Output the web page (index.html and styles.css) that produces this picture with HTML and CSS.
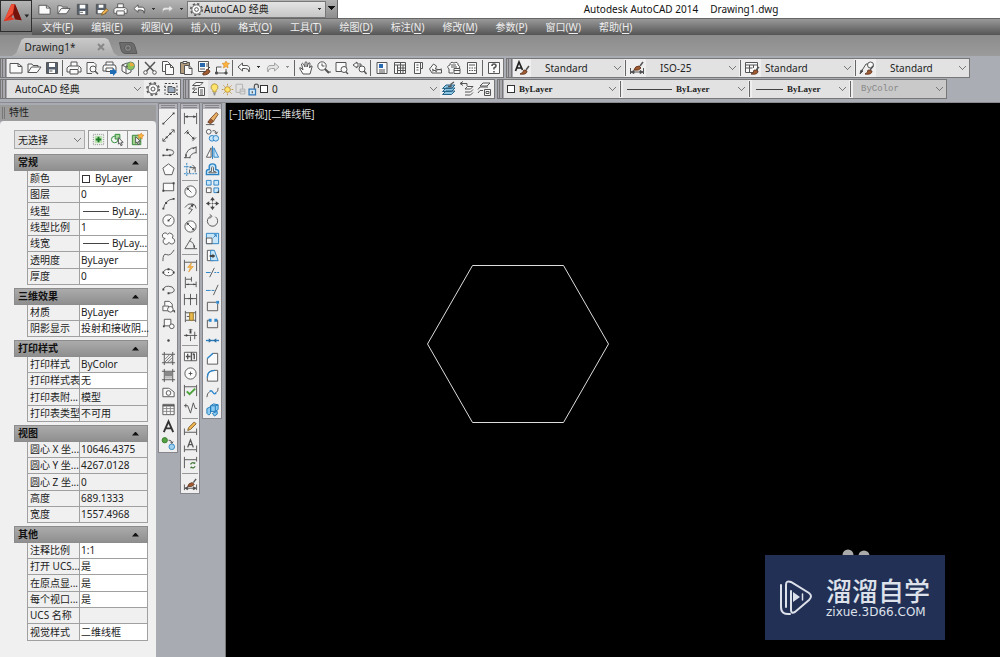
FILE: index.html
```html
<!DOCTYPE html>
<html lang="zh-CN">
<head>
<meta charset="utf-8">
<title>Autodesk AutoCAD 2014 Drawing1.dwg</title>
<link rel="stylesheet" href="styles.css">
</head>
<body>
<svg class="sprite" aria-hidden="true">
  <symbol id="new" viewBox="0 0 16 16"><path class="w" d="M2 3.500h8l4 3v6.500H2z"/><path d="M10 3.500v3h4"/></symbol>
  <symbol id="open" viewBox="0 0 16 16"><path class="w" d="M2 12.500V4h4l1 1.500h5V7"/><path class="w" d="M2 12.500L5.500 7h9.500l-4 5.500z"/></symbol>
  <symbol id="save" viewBox="0 0 16 16"><path class="k" d="M2.500 2.500h11v11h-11z"/><path fill="#fff" stroke="none" d="M5 3h6v4H5zM5 9.500h6V13H5z"/><path d="M5.500 11h3"/></symbol>
  <symbol id="saveas" viewBox="0 0 16 16"><path class="k" d="M2.500 2.500h10v10h-10z"/><path fill="#fff" stroke="none" d="M5 3h5v3H5zM4 8.500h7V12H4z"/><path class="o" d="M8 14l1-3 4-4 2 2-4 4z"/></symbol>
  <symbol id="print" viewBox="0 0 16 16"><path class="w" d="M5 6V2h6v4M3 6h10l2 2v4H1V8z"/><path class="w" d="M4 9.500h8v4.500H4z"/><path d="M12 8h1"/></symbol>
  <symbol id="undo" viewBox="0 0 16 16"><path class="w" d="M2 7l4.500-4v2.500H11Q15 6.500 13 12Q13 8.500 9.500 8.500h-3V11z"/></symbol>
  <symbol id="redo" viewBox="0 0 16 16"><path class="g" d="M14 7L9.500 3v2.500H5Q1 6.500 3 12Q3 8.500 6.500 8.500h3V11z"/></symbol>
  <symbol id="gear" viewBox="0 0 16 16"><circle class="w" cx="8" cy="8" r="5"/><circle cx="8" cy="8" r="6.200" stroke-width="1.500" stroke-dasharray="2.400 2.470"/><circle class="w" cx="8" cy="8" r="2"/></symbol>
  <symbol id="preview" viewBox="0 0 16 16"><path class="w" d="M3 13.500v-11h7l2 2v3M3 13.500h5"/><circle class="w" cx="9" cy="9" r="3"/><path stroke-width="1.500" d="M11 11l3 3"/></symbol>
  <symbol id="publish" viewBox="0 0 16 16"><path class="w" d="M4 5V2h7v3M2 5h11l1 2v4H1V7z"/><path class="w" d="M4 8h7v3.500H4z"/><path fill="#1f6db5" stroke="none" d="M8 10h3V8l4 4-4 4v-2H8z"/></symbol>
  <symbol id="box3d" viewBox="0 0 16 16"><path class="w" d="M2 5l5-2 4 2v7l-4 2-5-3z"/><circle cx="10.500" cy="6" r="4" fill="#8fc35a" stroke="#687"/><path fill="#e9ac40" stroke="none" d="M10 6V2.500A3.500 3.500 0 0 1 14 6z"/><path d="M2 5l4 2v6.500M6 7l2-1"/></symbol>
  <symbol id="cut" viewBox="0 0 16 16"><path stroke-width="1.500" d="M3 2l8.500 9M13 2L4.500 11"/><circle class="w" cx="3.500" cy="12.500" r="1.800"/><circle class="w" cx="12.500" cy="12.500" r="1.800"/></symbol>
  <symbol id="copy" viewBox="0 0 16 16"><path class="w" d="M2.500 1.500h5l3 3v7h-8z"/><path class="w" d="M5.500 4.500h5l3 3v7h-8z"/><path d="M10.500 4.500v3h3"/></symbol>
  <symbol id="paste" viewBox="0 0 16 16"><path fill="#b39c7a" d="M2.500 2.500h9v11h-9z"/><path class="w" d="M5 1.500h4v2H5zM6.500 5.500h4.500l3 3v6H6.500z"/><path d="M11 5.500v3h3"/></symbol>
  <symbol id="match" viewBox="0 0 16 16"><path class="w" d="M2.500 1.500h10v10h-10z"/><path fill="#2868ac" stroke="none" d="M4 3h5v4H4z"/><path d="M4 9h5M10 4h2M10 6h2"/><path class="b" d="M7 13q3 0 4-4l3 2q-1 4-7 4z"/><path stroke="#444" d="M12 9l2-2"/></symbol>
  <symbol id="block" viewBox="0 0 16 16"><path class="w" d="M2.500 13V7h5M2.500 13H12V9"/><path fill="#444" d="M1.500 12h2v2h-2zM11 12h2v2h-2z"/><path fill="#ffb33c" stroke="#d28a20" stroke-width=".6" d="M12 1l1 2 2.500.5-2 1.500.5 3-2-1.500L9.500 8l.5-3-2-1.500L11 3z"/></symbol>
  <symbol id="pan" viewBox="0 0 16 16"><path class="w" d="M5 14L2 9q-1-2 1-1l2 2L3.500 4q1-1.500 2 0L7 7V2.500q1-1.500 2 0V7l1.500-4q1.500-1 1.500 1l-.5 4L13 6q1.500-.5 1 1l-2 7z"/></symbol>
  <symbol id="zoomrt" viewBox="0 0 16 16"><circle class="w" cx="6" cy="6" r="4.200"/><path d="M6 3.500V6h2.500M11 12h4"/><path stroke-width="2" d="M9 9l4 4"/></symbol>
  <symbol id="zoomwin" viewBox="0 0 16 16"><path class="w" d="M2 2.500h10v9H2z"/><circle class="w" cx="10" cy="9.500" r="3"/><path stroke-width="1.500" d="M12 12l2 2"/></symbol>
  <symbol id="zoomprev" viewBox="0 0 16 16"><path class="w" d="M1 5l4-3v2h4v2H5v2z"/><circle class="w" cx="10" cy="9" r="3"/><path stroke-width="1.500" d="M12 11l2.500 3"/></symbol>
  <symbol id="props" viewBox="0 0 16 16"><path class="w" d="M3 2.500h10v11H3z"/><path fill="#2a6ab0" stroke="none" d="M5 4h4v4H5z"/><path d="M5 10h6M5 12h6"/></symbol>
  <symbol id="design" viewBox="0 0 16 16"><path class="w" d="M2.500 2.500h11v11h-11zM2.500 5h11M5.500 5v8M8.500 2.500v11M11 5v8M5.500 8h8M5.500 10.500h8"/></symbol>
  <symbol id="toolpal" viewBox="0 0 16 16"><path class="w" d="M4.500 2.500h6v11h-6zM10.500 2.500h2v6h-2M6.500 5h2M6.500 7.500h2M6.500 10h2"/></symbol>
  <symbol id="sheet" viewBox="0 0 16 16"><path class="w" d="M1.500 9l4-5 3 2-1 3 6 1v3H4zM4 11l10-2M4 9l5 3"/></symbol>
  <symbol id="markup" viewBox="0 0 16 16"><path class="w" d="M3 9Q0 6 4 5q0-4 4-2 4-2 4 2 3 1 1 4M5 5h5M5 7h6M3 9v4h4"/><path class="w" d="M8 8.500h6v5H8zM8 10.500h6"/></symbol>
  <symbol id="calc" viewBox="0 0 16 16"><path class="w" d="M3.500 2.500h9v11h-9z"/><path d="M5 5h6M5 8h1.500M7.500 8H9M10 8h1.500M5 10.500h1.500M7.500 10.500H9M10 10.500h1.500"/></symbol>
  <symbol id="help" viewBox="0 0 16 16"><path class="w" d="M2.500 2.500h11v11h-11z"/><path stroke-width="1.600" d="M6 6q0-2 2-2t2 2q0 1-2 2v1.500M8 11v1.500"/></symbol>
  <symbol id="textstyle" viewBox="0 0 16 16"><path stroke-width="1.700" stroke="#222" d="M1.500 11L5 2l3.500 8M3 8h4.500"/><path class="b" d="M6 14q3-1 4-4l3 1q0 4-7 3z"/><path stroke-width="1.500" d="M12 10l3-4"/></symbol>
  <symbol id="dimstyle" viewBox="0 0 16 16"><path d="M1.500 8v6M14.500 8v6M2 12h12"/><path fill="#444" d="M2 12l3-1.500v3zM14 12l-3-1.500v3z"/><path class="b" d="M5 10q1-4 5-4l2 2q-2 3-7 2z"/><path stroke-width="1.500" d="M11 6l3-4"/></symbol>
  <symbol id="tablestyle" viewBox="0 0 16 16"><path class="w" d="M1.500 2.500h12v10h-12z"/><path d="M1.500 5h12M1.500 8h7M5.500 5v7M9.500 5v3"/><path class="b" d="M7 14q3-1 3-4l4 1q0 4-7 3z"/><path stroke-width="1.500" d="M12 10l3-3"/></symbol>
  <symbol id="mleader" viewBox="0 0 16 16"><path d="M2 12L7 4h2"/><path fill="#444" d="M1 14l1-4 2 1z"/><circle class="w" cx="11.500" cy="5" r="3"/><path class="b" d="M6 14q3-1 3-4l4 1q0 4-7 3z"/><path stroke-width="1.500" d="M11 10l3-4"/></symbol>
  <symbol id="bulb" viewBox="0 0 16 16"><path fill="#ffe46b" stroke="#aa8930" d="M6 11V9Q3 7 4 4q1-3 4-3t4 3q1 3-2 5v2z"/><path d="M6.500 12.500h3M7 14.500h2"/></symbol>
  <symbol id="sun" viewBox="0 0 16 16"><circle cx="8" cy="8" r="3.500" fill="#ffe46b" stroke="#b68125"/><path stroke="#b68125" d="M8 1v2M8 13v2M1 8h2M13 8h2M3 3l1.500 1.500M11.500 11.500L13 13M3 13l1.500-1.500M11.500 4.500L13 3"/></symbol>
  <symbol id="vp" viewBox="0 0 16 16"><path stroke="#aaa" d="M2.500 1.500h8v10h-8z"/><path fill="#ddd" stroke="#aaa" d="M7.500 7.500h6v6h-6zM7.500 10h6"/></symbol>
  <symbol id="lock" viewBox="0 0 16 16"><path fill="#cfe6f7" stroke="#3177b8" stroke-width="1.500" d="M2.500 7.500h8v7h-8z"/><path stroke-width="1.500" d="M9 7V4q0-2.500 2.500-2.500T14 4v2M6.500 10v2.500"/></symbol>
  <symbol id="layers" viewBox="0 0 16 16"><path class="w" d="M1.500 4.500L5 1.500h7l-3 3zM1.500 8L4 5.500M1.500 11.500L4 9M1.500 8H6M1.500 11.500H6"/><path class="w" d="M7.500 6.500h6v8h-6zM9 9h3M9 11h3M9 13h3"/></symbol>
  <symbol id="layerset" viewBox="0 0 16 16"><path fill="#8cc3df" stroke="#28658b" d="M1.500 13.500L5 10h9l-3.500 3.500zM1.500 10.500L5 7h9l-3.500 3.500zM1.500 7.500L5 4h9l-3.500 3.500z"/><path stroke-width="1.300" d="M7 5.500h3V3l3-2"/></symbol>
  <symbol id="layerprev" viewBox="0 0 16 16"><path d="M1 2.500h7V5M1 2.500l3-2M1 2.500l3 2"/><path class="w" d="M6 8l2.500-2.500H14L11.500 8zM6 11h5.500L14 8.500M6 14h5.500L14 11.500"/></symbol>
  <symbol id="layerstate" viewBox="0 0 16 16"><path class="w" d="M3 5l3-3h7l-3 3zM1 8.500L3 6h8M1 12l2-2.500h3"/><path class="w" d="M7.500 8.500h6v6h-6zM9 10.500h3v2H9z"/></symbol>
  <symbol id="wsp" viewBox="0 0 16 16"><path stroke="#444" stroke-dasharray="2 1.500" d="M2 2.500h12v11H2z"/><path fill="#99a9bd" d="M5 5.500h4l1 1h2v5H5z"/><path d="M1 5l2 2M13 12l2 2"/></symbol>
  <symbol id="line" viewBox="0 0 16 16"><path d="M2.500 13.500l11-11"/><path class="p" d="M1.500 12.500h2v2h-2zM12.500 1.500h2v2h-2z"/></symbol>
  <symbol id="xline" viewBox="0 0 16 16"><path d="M2 14L14 2M2 11v3h3M11 2h3v3"/><path class="p" d="M5 9h2v2H5zM9 5h2v2H9z"/></symbol>
  <symbol id="pline" viewBox="0 0 16 16"><path d="M2.500 11h7q4 0 4-3t-4-3H7"/><path class="p" d="M1.500 10h2v2h-2zM8.500 10h2v2h-2zM5.500 4h2v2h-2z"/></symbol>
  <symbol id="polygon" viewBox="0 0 16 16"><path class="w" d="M8 2l6 4.500L11.700 13.500H4.300L2 6.500z"/></symbol>
  <symbol id="rect" viewBox="0 0 16 16"><path class="w" d="M2.500 4.500h11v8h-11z"/><path class="p" d="M1.500 11.500h2v2h-2zM12.500 3.500h2v2h-2z"/></symbol>
  <symbol id="arc" viewBox="0 0 16 16"><path d="M2.500 14Q4 4 13.500 3"/><path class="p" d="M1.500 12.500h2v2h-2zM4.500 6.500h2v2h-2zM12.500 2h2v2h-2z"/></symbol>
  <symbol id="circle" viewBox="0 0 16 16"><circle class="w" cx="8" cy="8" r="6"/><path d="M8 8l3-3"/><path class="p" d="M7 7h2v2H7z"/></symbol>
  <symbol id="cloud" viewBox="0 0 16 16"><path class="w" d="M4.500 8A3 3 0 1 1 7 3.500a3 3 0 1 1 5 4A3.200 3.200 0 1 1 8.500 12 3.200 3.200 0 1 1 4.500 8z"/></symbol>
  <symbol id="spline" viewBox="0 0 16 16"><path d="M2 14Q2 5 6 7t8-5"/></symbol>
  <symbol id="ellipse" viewBox="0 0 16 16"><ellipse class="w" cx="8" cy="8" rx="5.500" ry="3.500"/><path class="p" d="M7.500 7.500h1v1h-1zM1.500 7h2v2h-2zM12.500 7h2v2h-2zM7 3.500h2v2H7z"/></symbol>
  <symbol id="ellarc" viewBox="0 0 16 16"><path d="M2.500 8Q3 4.500 8 4.500t6 3.500-6 4"/><path class="p" d="M1.500 7h2v2h-2zM7 11h2v2H7z"/></symbol>
  <symbol id="insert" viewBox="0 0 16 16"><path class="w" d="M4 7V2.500h5l3 3V9H7"/><path class="w" d="M2 7.500h6v5H2z"/><circle class="w" cx="10" cy="11" r="3"/><path class="p" d="M12 12h3v3z"/></symbol>
  <symbol id="mkblock" viewBox="0 0 16 16"><path class="w" d="M3.500 3.500h7v7h-7z"/><circle class="w" cx="11.500" cy="11" r="2.500"/><path class="p" d="M2 10h2v2H2z"/></symbol>
  <symbol id="point" viewBox="0 0 16 16"><circle class="p" cx="8" cy="8" r="1.300"/></symbol>
  <symbol id="hatch" viewBox="0 0 16 16"><path d="M3.500 1v14M12.500 1v14M1 3.500h14M1 12.500h14"/><path stroke="#777" d="M4 9l5-5M4 12l8-8M7 12l5-5M10 12l2-2"/></symbol>
  <symbol id="gradient" viewBox="0 0 16 16"><path d="M3.500 1v14M12.500 1v14M1 3.500h14M1 12.500h14"/><path fill="#888" stroke="none" d="M4 4h8v5H4z"/><path stroke="#999" d="M4 10.500h8"/></symbol>
  <symbol id="region" viewBox="0 0 16 16"><path class="w" d="M2 3.500h6q1 0 2 1l4 3v5H2z"/><circle class="w" cx="8" cy="8.500" r="2.500"/></symbol>
  <symbol id="table" viewBox="0 0 16 16"><path class="w" d="M2 2.500h12v11H2z"/><path stroke="#888" d="M2 7h12M2 10h12M6 5v8M10 5v8"/><path stroke-width="1.500" d="M2 4h12"/></symbol>
  <symbol id="mtext" viewBox="0 0 16 16"><path stroke="#333" stroke-width="2" d="M3 14L8 2.500 13 14M5 10h6"/></symbol>
  <symbol id="addsel" viewBox="0 0 16 16"><circle cx="4" cy="4.500" r="2.800" fill="#54a143" stroke="#387b2b"/><circle cx="11.500" cy="11.500" r="3" fill="#9ed0ef" stroke="#368cc2"/><path d="M8 4.500q4 0 3.500 3M10 6l1.500 2L13 6"/></symbol>
  <symbol id="dimlin" viewBox="0 0 16 16"><path d="M1.500 2v12M14.500 2v12M2 6h12"/><path class="p" d="M2 6l3-1.500v3zM14 6l-3-1.500v3z"/></symbol>
  <symbol id="dimali" viewBox="0 0 16 16"><path d="M1.500 6l4-4M10 14l4-4M4.500 4.500l7 7"/><path class="p" d="M4 4h3L4 7zM12 12H9l3-3z"/></symbol>
  <symbol id="arclen" viewBox="0 0 16 16"><path d="M2.500 14Q3 3 14 2.500M7 14q1-5 7-6M1 13.500h7M14 1.500V9"/><path class="p" d="M2 10h2v3zM13 3l-3 .5 1 1z"/></symbol>
  <symbol id="ordinate" viewBox="0 0 16 16"><path stroke="#287fc1" stroke-dasharray="2 1" d="M4 1v14M1 12.500h14M1 5h8"/><path d="M7 6h6v5M10 3l3 3-3 2M7 8v4"/></symbol>
  <symbol id="radius" viewBox="0 0 16 16"><circle class="w" cx="8" cy="8" r="6"/><path d="M9 9L5 5"/><path class="p" d="M4 4h3L4 7z"/></symbol>
  <symbol id="jograd" viewBox="0 0 16 16"><path d="M2 7q3-5 8-4 4 1 4 5M11 4L6 8l4 1-4 5"/><path class="p" d="M12 3l-4 1 2 3z"/></symbol>
  <symbol id="diameter" viewBox="0 0 16 16"><circle class="w" cx="8" cy="8" r="6"/><path d="M4 4l8 8"/><path class="p" d="M4 4h3L4 7zM12 12H9l3-3z"/></symbol>
  <symbol id="angular" viewBox="0 0 16 16"><path d="M15 13.500H2L9 2M7 5q5 2 5 8"/><path class="p" d="M12 13l-1-3h2z"/></symbol>
  <symbol id="quick" viewBox="0 0 16 16"><path d="M1.500 2v12M14.500 2v12M2 4.500h12"/><path fill="#ffb849" stroke="#df9934" stroke-width=".7" d="M9 5L5 10h3l-2 5 5-6H8z"/></symbol>
  <symbol id="baseline" viewBox="0 0 16 16"><path d="M2.500 2v12M9 2v5M14 7v6M3 4.500h6M3 10h11"/><path class="p" d="M3 10l3-1v2zM14 10l-3-1v2z"/></symbol>
  <symbol id="continue" viewBox="0 0 16 16"><path d="M1.500 2v12M8 2v12M14.500 2v12M1.500 7h13"/><path class="p" d="M8 7L6 6v2zM8 7l2-1v2z"/></symbol>
  <symbol id="dimspace" viewBox="0 0 16 16"><path d="M2.500 2v12M13.500 2v12M2.500 4h11M2.500 12h11M4 8h3"/><path fill="#e8b94b" stroke="#9a792b" d="M7 4h4v8H7z"/></symbol>
  <symbol id="dimbreak" viewBox="0 0 16 16"><path d="M8 2v4M8 10v5M1 9h14M6 3h4M12.500 5v8"/><path class="p" d="M6 9L3 7.500v3zM7 4h2v3H7z"/></symbol>
  <symbol id="tolerance" viewBox="0 0 16 16"><path class="w" d="M1.500 3.500h13v9h-13z"/><path stroke-width="1.500" d="M9 3.500v9M5 5v6M3 8h5M12 5v6M10.500 6L12 5"/></symbol>
  <symbol id="center" viewBox="0 0 16 16"><circle class="w" cx="8" cy="8" r="6"/><path d="M8 6v4M6 8h4"/></symbol>
  <symbol id="inspect" viewBox="0 0 16 16"><path d="M1.500 2v12M14.500 2v12M2 4h12"/><path stroke="#4ba13a" stroke-width="2" d="M4 9l3 3 6-6"/></symbol>
  <symbol id="jogline" viewBox="0 0 16 16"><path d="M1 6h4l3 8 3-11 2 6h2M3 4v4"/></symbol>
  <symbol id="dimedit" viewBox="0 0 16 16"><path d="M1.500 8v7M14.500 8v7M2 12h12"/><path class="o" d="M5 10l1-3 6-6 2 2-6 6z"/></symbol>
  <symbol id="dimtedit" viewBox="0 0 16 16"><path d="M1.500 8v7M14.500 8v7M2 12.500h12"/><path stroke-width="1.400" d="M5 10l3-8 3 8M6 7h4"/></symbol>
  <symbol id="dimupdate" viewBox="0 0 16 16"><path d="M1.500 2v12M14.500 2v5M2 5h12"/><path stroke="#3c7430" stroke-width="1.300" d="M8 10q2-3 4-1l1-1M13 12q-2 3-4 1l-1 1"/></symbol>
  <symbol id="erase" viewBox="0 0 16 16"><path class="b" d="M3 12l3-4 3 3-3 2.500z"/><path fill="#e7b066" stroke="#80512c" d="M6 8l6-6.500 2 2L9 11z"/><path d="M1 14.500h9"/></symbol>
  <symbol id="copyobj" viewBox="0 0 16 16"><circle class="w" cx="4" cy="4" r="2.500"/><path d="M8 3q4-1 4 3M10.500 4.500L12 6.500 13.500 4"/><g class="c"><circle cx="7.500" cy="11" r="3"/><circle cx="11.500" cy="11" r="3"/></g></symbol>
  <symbol id="mirror" viewBox="0 0 16 16"><path class="w" d="M6.500 3v10h-5z"/><path class="c" d="M9.500 3v10h5z"/><path stroke="#267dbd" d="M8 1v14"/></symbol>
  <symbol id="offset" viewBox="0 0 16 16"><path class="c" stroke-width="1.500" d="M1.500 13.500V10q0-2 3-2V5q0-3 3.500-3t3.500 3v3q3 0 3 2v3.500z"/><path class="w" d="M4 11.500q0-1.500 3-1.500V6q1-2 2 0v4q3 0 3 1.500z"/></symbol>
  <symbol id="array" viewBox="0 0 16 16"><path class="w" d="M1.500 9.500h5v5h-5z"/><path class="c" d="M1.500 1.500h5v5h-5zM9.500 1.500h5v5h-5zM9.500 9.500h5v5h-5z"/><path class="p" d="M12 15h3v-3z"/></symbol>
  <symbol id="move" viewBox="0 0 16 16"><path stroke-dasharray="4 1 2 1" d="M8 2v12M2 8h12"/><path class="p" d="M8 1l2.500 3.500h-5zM8 15l2.500-3.500h-5zM1 8l3.500-2.500v5zM15 8l-3.500-2.500v5z"/></symbol>
  <symbol id="rotate" viewBox="0 0 16 16"><path d="M6 3.500A5.500 5.500 0 1 0 11 4M5 1.500l2.500 2L5 6"/></symbol>
  <symbol id="scale" viewBox="0 0 16 16"><path class="c" d="M1.500 2.500h13v11h-13z"/><path class="w" d="M1.500 7.500h6v6h-6z"/><path stroke="#267dbd" d="M9 7l3-3M9.500 4H12v2.500"/></symbol>
  <symbol id="stretch" viewBox="0 0 16 16"><path class="w" d="M2.500 2.500H9v11H2.500z"/><path class="c" d="M6 2.500h4l4 11H6z"/><path class="p" d="M5 7.500h3V6l3 2.500L8 11V9.500H5z"/></symbol>
  <symbol id="trim" viewBox="0 0 16 16"><path stroke="#287fc1" d="M1 8h5M10 8h2M13 8h2"/><path d="M5 13l5-10"/></symbol>
  <symbol id="extend" viewBox="0 0 16 16"><path stroke="#287fc1" d="M1 9h5M7 9h3"/><path d="M9 14l5-11"/></symbol>
  <symbol id="breakpt" viewBox="0 0 16 16"><path d="M12 3.500H2.500v9h11V5"/><path fill="#2b86cc" stroke="none" d="M12 2h3v3h-3z"/></symbol>
  <symbol id="break" viewBox="0 0 16 16"><path d="M5 4.500H2.500v8h11v-8H11"/><path fill="#2b86cc" stroke="none" d="M4 3h3v3H4zM10 3h3v3h-3z"/></symbol>
  <symbol id="join" viewBox="0 0 16 16"><path stroke="#287fc1" stroke-width="1.500" d="M1 8h14"/><path fill="#2b6b9e" stroke="none" d="M4 5.500L7 8l-3 2.500zM12 5.500L9 8l3 2.500z"/></symbol>
  <symbol id="chamfer" viewBox="0 0 16 16"><path class="w" d="M2.500 14V8l6-5.500h5V14z"/><path stroke="#2b86cc" stroke-width="1.500" d="M2.500 8l6-5.500"/></symbol>
  <symbol id="fillet" viewBox="0 0 16 16"><path class="w" d="M2.500 14V10q0-7.500 8-7.500h3V14z"/><path stroke="#2b86cc" stroke-width="1.500" d="M2.500 10q0-7.500 8-7.500"/></symbol>
  <symbol id="blend" viewBox="0 0 16 16"><path d="M2 13q0-4 3-6M12 8q2-1 2-5"/><path stroke="#2b86cc" stroke-width="1.500" d="M5 7q2-2 3.500 1t3.500 0"/></symbol>
  <symbol id="explode" viewBox="0 0 16 16"><path fill="#8ecdf3" stroke="#1d78b8" d="M6 4l3-2 5 1v5l-3 2H6zM6 4h5v6M11 4l3-1M2 7l4-2v7l-2 2-2-2zM8 12l5-2v3l-3 2z"/></symbol>
  <symbol id="qsel" viewBox="0 0 16 16"><path stroke="#888" stroke-dasharray="1 1" d="M2.500 2.500h11v11h-11z"/><path fill="#bfe3b4" stroke="none" d="M4 4h8v8H4z"/><path stroke="#1c7a26" stroke-width="2" d="M8 5v6M5 8h6"/></symbol>
  <symbol id="pick" viewBox="0 0 16 16"><circle cx="5" cy="8" r="3.500" stroke="#2d8a36"/><path fill="#a9d79e" stroke="#2d8a36" d="M5.500 2.500h5v5h-5z"/><path class="w" d="M9 6l5 5h-2l1 3-1.500.5-1-3L9 13z"/></symbol>
  <symbol id="qpick" viewBox="0 0 16 16"><path fill="#9ed28c" stroke="#39843a" d="M2.500 3.500h9v10h-9z"/><path class="w" d="M6 5l5 5H9l1 3-1.500.5-1-3L6 12z"/><path fill="#ffb641" stroke="#d17c23" stroke-width=".6" d="M12 1l1 2 2 .5-2 1.500v2.500l-2-1.500-2 1 .5-2.500L8 3h3z"/></symbol>
</svg>

<header class="top">
  <button class="app" aria-label="应用程序菜单">
    <svg viewBox="0 0 32 31" aria-hidden="true"><path fill="#b91f12" d="M3 21L11 3h4l7 17-7-1-2-5-3 4z"/><path fill="#ef5138" d="M11 3h3l-1 9-10 9z"/><path fill="#74130c" d="M13 12l2-9 7 17-7-1z"/><path fill="#e53923" d="M3 21l7-5 5 3-5 1z"/><path fill="#222" d="M25 14h5l-2.500 3z"/></svg>
  </button>
  <div class="bars">
    <div class="title">
      <div class="quick">
        <button aria-label="新建"><svg><use href="#new"/></svg></button>
        <button aria-label="打开"><svg><use href="#open"/></svg></button>
        <button aria-label="保存"><svg><use href="#save"/></svg></button>
        <button aria-label="另存为"><svg><use href="#saveas"/></svg></button>
        <button aria-label="打印"><svg><use href="#print"/></svg></button>
        <button aria-label="放弃"><svg><use href="#undo"/></svg></button>
        <i class="arrow"></i>
        <button aria-label="重做"><svg><use href="#redo"/></svg></button>
        <i class="arrow"></i>
        <div class="ws"><svg aria-hidden="true"><use href="#gear"/></svg><select aria-label="工作空间"><option>AutoCAD 经典</option></select><i class="arrow"></i></div>
        <button class="more" aria-label="自定义快速访问工具栏"></button>
      </div>
      <h1><span>Autodesk AutoCAD 2014</span><span>Drawing1.dwg</span></h1>
    </div>
    <nav class="menu">
      <button>文件(<u>F</u>)</button><button>编辑(<u>E</u>)</button><button>视图(<u>V</u>)</button><button>插入(<u>I</u>)</button><button>格式(<u>O</u>)</button><button>工具(<u>T</u>)</button><button>绘图(<u>D</u>)</button><button>标注(<u>N</u>)</button><button>修改(<u>M</u>)</button><button>参数(<u>P</u>)</button><button>窗口(<u>W</u>)</button><button>帮助(<u>H</u>)</button>
    </nav>
  </div>
</header>

<div class="tabs">
  <button class="tab">Drawing1*<svg viewBox="0 0 8 8" aria-hidden="true"><path d="M1 1l6 6M7 1L1 7"/></svg></button>
  <button class="addtab" aria-label="新图形"><svg viewBox="0 0 20 14" aria-hidden="true"><path fill="#6c6c6c" stroke="#5a5a5a" d="M1.500 1.500H13q3 0 4 4l2 7H7q-3 0-4-4z"/><circle cx="10" cy="7" r="3.500" fill="#8d8d8d" stroke="#5a5a5a"/><path stroke="#5a5a5a" d="M10 5v4M8 7h4"/></svg></button>
</div>

<div class="toolbars">
  <div class="row">
    <div class="bar">
      <i class="grip"></i>
      <button aria-label="新建"><svg><use href="#new"/></svg></button><button aria-label="打开"><svg><use href="#open"/></svg></button><button aria-label="保存"><svg><use href="#save"/></svg></button>
      <i class="sep"></i>
      <button aria-label="打印"><svg><use href="#print"/></svg></button><button aria-label="打印预览"><svg><use href="#preview"/></svg></button><button aria-label="发布"><svg><use href="#publish"/></svg></button><button aria-label="三维打印"><svg><use href="#box3d"/></svg></button>
      <i class="sep"></i>
      <button aria-label="剪切"><svg><use href="#cut"/></svg></button><button aria-label="复制"><svg><use href="#copy"/></svg></button><button aria-label="粘贴"><svg><use href="#paste"/></svg></button><button aria-label="特性匹配"><svg><use href="#match"/></svg></button><button aria-label="块编辑器"><svg><use href="#block"/></svg></button>
      <i class="sep"></i>
      <button aria-label="放弃"><svg><use href="#undo"/></svg></button><i class="arrow"></i><button aria-label="重做"><svg><use href="#redo"/></svg></button><i class="arrow dim"></i>
      <i class="sep"></i>
      <button aria-label="平移"><svg><use href="#pan"/></svg></button><button aria-label="实时缩放"><svg><use href="#zoomrt"/></svg></button><button aria-label="窗口缩放"><svg><use href="#zoomwin"/></svg></button><button aria-label="缩放上一个"><svg><use href="#zoomprev"/></svg></button>
      <i class="sep"></i>
      <button aria-label="特性"><svg><use href="#props"/></svg></button><button aria-label="设计中心"><svg><use href="#design"/></svg></button><button aria-label="工具选项板"><svg><use href="#toolpal"/></svg></button><button aria-label="图纸集"><svg><use href="#sheet"/></svg></button><button aria-label="标记集"><svg><use href="#markup"/></svg></button><button aria-label="计算器"><svg><use href="#calc"/></svg></button>
      <i class="sep"></i>
      <button aria-label="帮助"><svg><use href="#help"/></svg></button>
    </div>
    <div class="bar">
      <i class="grip"></i>
      <button aria-label="文字样式"><svg><use href="#textstyle"/></svg></button><select class="style" aria-label="文字样式控制"><option>Standard</option></select>
      <i class="sep"></i>
      <button aria-label="标注样式"><svg><use href="#dimstyle"/></svg></button><select class="style" aria-label="标注样式控制"><option>ISO-25</option></select>
      <i class="sep"></i>
      <button aria-label="表格样式"><svg><use href="#tablestyle"/></svg></button><select class="style near" aria-label="表格样式控制"><option>Standard</option></select>
      <i class="sep"></i>
      <button aria-label="多重引线样式"><svg><use href="#mleader"/></svg></button><select class="style" aria-label="多重引线样式控制"><option>Standard</option></select>
    </div>
  </div>
  <div class="row">
    <div class="bar">
      <i class="grip"></i>
      <select class="space" aria-label="工作空间控制"><option>AutoCAD 经典</option></select>
      <button aria-label="工作空间设置"><svg><use href="#gear"/></svg></button><button aria-label="我的工作空间"><svg><use href="#wsp"/></svg></button>
    </div>
    <div class="bar">
      <i class="grip"></i>
      <button aria-label="图层特性"><svg><use href="#layers"/></svg></button>
      <div class="layer"><svg><use href="#bulb"/></svg><svg><use href="#sun"/></svg><svg><use href="#vp"/></svg><svg><use href="#lock"/></svg><i class="swatch"></i><select aria-label="图层控制"><option>0</option></select></div>
      <button aria-label="置为当前"><svg><use href="#layerset"/></svg></button><button aria-label="上一个图层"><svg><use href="#layerprev"/></svg></button><button aria-label="图层状态"><svg><use href="#layerstate"/></svg></button>
    </div>
    <div class="bar serif">
      <i class="grip"></i>
      <div class="pick color"><i class="swatch"></i><select aria-label="颜色控制"><option>ByLayer</option></select></div>
      <i class="sep"></i>
      <div class="pick ltype"><i class="rule"></i><select aria-label="线型控制"><option>ByLayer</option></select></div>
      <i class="sep"></i>
      <div class="pick lweight"><i class="rule"></i><select aria-label="线宽控制"><option>ByLayer</option></select></div>
      <i class="sep"></i>
      <select class="plot" aria-label="打印样式控制" disabled><option>ByColor</option></select>
    </div>
  </div>
</div>

<main class="work">
  <aside class="palette">
    <h2><i class="grip"></i>特性</h2>
    <div class="props">
      <div class="choose">
        <select aria-label="选择对象"><option>无选择</option></select>
        <button aria-label="切换 PICKADD"><svg><use href="#qsel"/></svg></button><button aria-label="选择"><svg><use href="#pick"/></svg></button><button aria-label="快速选择"><svg><use href="#qpick"/></svg></button>
      </div>
      <section><h3>常规<i></i></h3>
        <table>
          <tr><th>颜色</th><td><i class="swatch"></i>ByLayer</td></tr>
          <tr><th>图层</th><td>0</td></tr>
          <tr><th>线型</th><td><i class="rule"></i>ByLay...</td></tr>
          <tr><th>线型比例</th><td>1</td></tr>
          <tr><th>线宽</th><td><i class="rule"></i>ByLay...</td></tr>
          <tr><th>透明度</th><td>ByLayer</td></tr>
          <tr><th>厚度</th><td>0</td></tr>
        </table>
      </section>
      <section><h3>三维效果<i></i></h3>
        <table>
          <tr><th>材质</th><td>ByLayer</td></tr>
          <tr><th>阴影显示</th><td>投射和接收阴...</td></tr>
        </table>
      </section>
      <section><h3>打印样式<i></i></h3>
        <table>
          <tr><th>打印样式</th><td class="ro">ByColor</td></tr>
          <tr><th>打印样式表</th><td>无</td></tr>
          <tr><th>打印表附...</th><td class="ro">模型</td></tr>
          <tr><th>打印表类型</th><td class="ro">不可用</td></tr>
        </table>
      </section>
      <section><h3>视图<i></i></h3>
        <table>
          <tr><th>圆心 X 坐...</th><td class="ro">10646.4375</td></tr>
          <tr><th>圆心 Y 坐...</th><td class="ro">4267.0128</td></tr>
          <tr><th>圆心 Z 坐...</th><td class="ro">0</td></tr>
          <tr><th>高度</th><td class="ro">689.1333</td></tr>
          <tr><th>宽度</th><td class="ro">1557.4968</td></tr>
        </table>
      </section>
      <section><h3>其他<i></i></h3>
        <table>
          <tr><th>注释比例</th><td>1:1</td></tr>
          <tr><th>打开 UCS...</th><td>是</td></tr>
          <tr><th>在原点显...</th><td>是</td></tr>
          <tr><th>每个视口...</th><td>是</td></tr>
          <tr><th>UCS 名称</th><td class="ro"></td></tr>
          <tr><th>视觉样式</th><td>二维线框</td></tr>
        </table>
      </section>
    </div>
  </aside>

  <div class="docks">
    <div class="dock" role="toolbar" aria-label="绘图">
      <button aria-label="直线"><svg><use href="#line"/></svg></button>
      <button aria-label="构造线"><svg><use href="#xline"/></svg></button>
      <button aria-label="多段线"><svg><use href="#pline"/></svg></button>
      <button aria-label="多边形"><svg><use href="#polygon"/></svg></button>
      <button aria-label="矩形"><svg><use href="#rect"/></svg></button>
      <button aria-label="圆弧"><svg><use href="#arc"/></svg></button>
      <button aria-label="圆"><svg><use href="#circle"/></svg></button>
      <button aria-label="修订云线"><svg><use href="#cloud"/></svg></button>
      <button aria-label="样条曲线"><svg><use href="#spline"/></svg></button>
      <button aria-label="椭圆"><svg><use href="#ellipse"/></svg></button>
      <button aria-label="椭圆弧"><svg><use href="#ellarc"/></svg></button>
      <button aria-label="插入块"><svg><use href="#insert"/></svg></button>
      <button aria-label="创建块"><svg><use href="#mkblock"/></svg></button>
      <button aria-label="点"><svg><use href="#point"/></svg></button>
      <button aria-label="图案填充"><svg><use href="#hatch"/></svg></button>
      <button aria-label="渐变色"><svg><use href="#gradient"/></svg></button>
      <button aria-label="面域"><svg><use href="#region"/></svg></button>
      <button aria-label="表格"><svg><use href="#table"/></svg></button>
      <button aria-label="多行文字"><svg><use href="#mtext"/></svg></button>
      <button aria-label="添加选定对象"><svg><use href="#addsel"/></svg></button>
    </div>
    <div class="dock" role="toolbar" aria-label="标注">
      <button aria-label="线性"><svg><use href="#dimlin"/></svg></button>
      <button aria-label="对齐"><svg><use href="#dimali"/></svg></button>
      <button aria-label="弧长"><svg><use href="#arclen"/></svg></button>
      <button aria-label="坐标"><svg><use href="#ordinate"/></svg></button>
      <hr>
      <button aria-label="半径"><svg><use href="#radius"/></svg></button>
      <button aria-label="折弯"><svg><use href="#jograd"/></svg></button>
      <button aria-label="直径"><svg><use href="#diameter"/></svg></button>
      <button aria-label="角度"><svg><use href="#angular"/></svg></button>
      <hr>
      <button aria-label="快速标注"><svg><use href="#quick"/></svg></button>
      <button aria-label="基线"><svg><use href="#baseline"/></svg></button>
      <button aria-label="连续"><svg><use href="#continue"/></svg></button>
      <button aria-label="等距标注"><svg><use href="#dimspace"/></svg></button>
      <button aria-label="折断标注"><svg><use href="#dimbreak"/></svg></button>
      <hr>
      <button aria-label="公差"><svg><use href="#tolerance"/></svg></button>
      <button aria-label="圆心标记"><svg><use href="#center"/></svg></button>
      <button aria-label="检验"><svg><use href="#inspect"/></svg></button>
      <button aria-label="折弯线性"><svg><use href="#jogline"/></svg></button>
      <hr>
      <button aria-label="编辑标注"><svg><use href="#dimedit"/></svg></button>
      <button aria-label="编辑标注文字"><svg><use href="#dimtedit"/></svg></button>
      <button aria-label="标注更新"><svg><use href="#dimupdate"/></svg></button>
      <hr>
      <button aria-label="标注样式"><svg><use href="#dimstyle"/></svg></button>
    </div>
    <div class="dock" role="toolbar" aria-label="修改">
      <button aria-label="删除"><svg><use href="#erase"/></svg></button>
      <button aria-label="复制"><svg><use href="#copyobj"/></svg></button>
      <button aria-label="镜像"><svg><use href="#mirror"/></svg></button>
      <button aria-label="偏移"><svg><use href="#offset"/></svg></button>
      <button aria-label="阵列"><svg><use href="#array"/></svg></button>
      <button aria-label="移动"><svg><use href="#move"/></svg></button>
      <button aria-label="旋转"><svg><use href="#rotate"/></svg></button>
      <button aria-label="缩放"><svg><use href="#scale"/></svg></button>
      <button aria-label="拉伸"><svg><use href="#stretch"/></svg></button>
      <button aria-label="修剪"><svg><use href="#trim"/></svg></button>
      <button aria-label="延伸"><svg><use href="#extend"/></svg></button>
      <button aria-label="打断于点"><svg><use href="#breakpt"/></svg></button>
      <button aria-label="打断"><svg><use href="#break"/></svg></button>
      <button aria-label="合并"><svg><use href="#join"/></svg></button>
      <button aria-label="倒角"><svg><use href="#chamfer"/></svg></button>
      <button aria-label="圆角"><svg><use href="#fillet"/></svg></button>
      <button aria-label="光顺曲线"><svg><use href="#blend"/></svg></button>
      <button aria-label="分解"><svg><use href="#explode"/></svg></button>
    </div>
  </div>

  <div class="canvas">
    <div class="view">[−][俯视][二维线框]</div>
    <svg class="hex" viewBox="0 0 184 160" role="img" aria-label="正六边形"><path d="M1.500 80L46.500 1.500h91L182.500 80l-45 78.500h-91z"/></svg>
    <div class="mark">
      <svg class="dots" viewBox="0 0 30 6" aria-hidden="true"><circle cx="6" cy="6" r="5.500"/><circle cx="22" cy="7" r="5.500"/></svg>
      <svg class="logo" viewBox="0 0 36 38" aria-hidden="true"><path d="M2 6v22q0 8 9 7M7 28V6q0-5 5-3l18 11q4 3 0 7L16 33q-4 2-4-2V12"/><path class="play" d="M14 13l7 5-7 5z"/><path stroke-width="1.500" d="M23.500 15v6"/></svg>
      <div class="name"><strong>溜溜自学</strong><span>zixue.3D66.COM</span></div>
    </div>
  </div>
</main>
</body>
</html>
```
FILE: styles.css
```css
* { box-sizing: border-box; }
body {
  margin: 0;
  min-height: 100vh;
  display: flex;
  flex-direction: column;
  background: #a9abb2;
  color: #222;
  font: 10px/16px "Noto Sans", "Noto Sans CJK SC", sans-serif;
}
button, select { font: inherit; color: inherit; margin: 0; padding: 0; border: 0; background: none; border-radius: 0; }
button { display: flex; align-items: center; justify-content: center; flex: none; }
select { appearance: none; min-width: 0; }
svg { width: 16px; height: 16px; flex: none; fill: none; stroke: #555; stroke-width: 1; display: block; }
.sprite { position: absolute; width: 0; height: 0; }
.w { fill: #fafafa; }
.k { fill: #56606c; }
.g { fill: #e5e5e5; stroke: #a2a2a2; }
.o { fill: #f0b653; stroke: #80612c; }
.b { fill: #a25c32; stroke: #6b3c23; }
.c { fill: #c8e6fa; stroke: #2b82c3; }
.p { fill: #444; stroke: none; }

/* title and menu */
.top { display: flex; height: 35px; background: #777; }
.app { width: 32px; border: 1px solid #2e2e2e; background: linear-gradient(#b5b5b5, #777); align-self: flex-start; }
.app svg { width: 30px; height: 30px; stroke: none; }
.bars { flex: 1; display: flex; flex-direction: column; min-width: 0; }
.title { display: flex; height: 18px; background: #fff; }
.quick { display: flex; align-items: center; width: 306px; padding-left: 3px; background: linear-gradient(#b4b4b4, #8d8d8d); border-right: 1px solid #666; }
.quick > button { width: 19px; height: 18px; }
.quick svg { width: 15px; height: 15px; }
.arrow { flex: none; width: 11px; height: 16px; background: conic-gradient(from 315deg at 50% 60%, #333 90deg, transparent 0) center/5px 3px no-repeat; }
.quick > .arrow { width: 9px; }
.dim { opacity: .5; }
.ws { display: flex; align-items: center; flex: 1; height: 17px; margin-left: 1px; padding-left: 1px; border: 1px solid #777; background: linear-gradient(#e4e4e4, #c6c6c6); }
.ws select { flex: 1; font-size: 10px; }
.quick > .more { width: 11px; height: 18px; background: conic-gradient(from 315deg at 50% 70%, #111 90deg, transparent 0) center/7px 6px no-repeat; }
h1 { flex: 1; margin: 0; padding-left: 24px; display: flex; justify-content: center; gap: 12px; font-size: 10px; font-weight: 400; line-height: 18px; color: #111; }
.menu { display: flex; gap: 18px; height: 17px; padding-left: 10px; background: linear-gradient(#999, #555); border-top: 1px solid #666; color: #eee; }
u { text-underline-offset: 2px; }

/* document tabs */
.tabs { display: flex; height: 21px; padding: 3px 0 0 12px; background: linear-gradient(#8c8c8c, #9b9b9b); align-items: flex-end; }
.tab { width: 106px; height: 18px; gap: 22px; background: linear-gradient(#c9c9c9, #aeaeae); clip-path: polygon(0 100%, 4% 84%, 9% 10%, 12% 0, 88% 0, 91% 10%, 96% 84%, 100% 100%); }
.tab svg { width: 8px; height: 8px; stroke: #888; stroke-width: 2; }
.addtab { height: 17px; }
.addtab svg { width: 20px; height: 14px; }

/* docked toolbars */
.toolbars { display: flex; flex-direction: column; gap: 1px; padding: 2px 0 3px; border-bottom: 1px solid #8a8a90; background: #abadb4; }
.row { display: flex; gap: 2px; }
.bar { display: flex; align-items: stretch; height: 20px; border: 1px solid #777; background: #efefef; }
.bar > button { width: 18px; }
.grip { flex: none; width: 6px; background: linear-gradient(90deg, #a8a8ae 1px, #777 1px 2px, #a8a8ae 2px 4px, #777 4px 5px, #a8a8ae 5px); }
.sep { flex: none; width: 1px; margin: 1px 2px 1px 1px; background: #666; }
.bar select, .pick, .layer { background-color: #e2e2e2; }
.bar select, .choose select {
  background-image: linear-gradient(45deg, transparent 45%, #777 45% 60%, transparent 60%), linear-gradient(-45deg, transparent 45%, #777 45% 60%, transparent 60%);
  background-size: 4px 4px;
  background-repeat: no-repeat;
  background-position: right 6px center, right 3px center;
}
.style { width: 93px; padding-left: 14px; }
.near { padding-left: 4px; }
.space { width: 137px; padding-left: 8px; }
.layer, .pick { display: flex; align-items: center; }
.layer { width: 232px; }
.layer svg { width: 13px; height: 13px; }
.layer select, .pick select { flex: 1; align-self: stretch; padding-left: 4px; }
.swatch { flex: none; width: 8px; height: 8px; border: 1px solid #333; background: #fff; }
.rule { flex: none; height: 1px; background: #444; }
.serif { font: bold 9px/16px "Liberation Serif", serif; }
.color { width: 115px; padding-left: 3px; }
.ltype { width: 125px; padding-left: 4px; }
.ltype .rule { width: 45px; }
.lweight { width: 97px; padding-left: 4px; }
.lweight .rule { width: 27px; }
.bar .plot { width: 93px; padding-left: 8px; background-color: #c9c9c9; color: #888; font: 9px/16px "Liberation Mono", monospace; opacity: 1; }

/* properties palette */
.work { flex: 1; display: flex; }
.palette { width: 156px; flex: none; padding-top: 2px; background: #a9abb2; }
.palette h2 { display: flex; gap: 3px; margin: 0; height: 16px; font-size: 10px; line-height: 15px; font-weight: 400; background: #9c9c9c; }
.palette h2 .grip { margin: 2px 0; background: linear-gradient(90deg, transparent 2px, #777 2px 3px, transparent 3px 4px, #777 4px 5px, transparent 5px); }
.props { background: #f0f0f0; padding: 8px 8px 12px 14px; border-radius: 4px 4px 0 0; min-height: calc(100% - 16px); }
.choose { display: flex; padding: 1px 0 5px; }
.choose select { flex: 1; height: 19px; margin-right: 3px; padding-left: 3px; border: 1px solid #aaa; background-color: #e3e3e3; }
.choose button { width: 20px; height: 19px; border: 1px solid #999; background: #f4f4f4; }
.choose button + button { border-left: 0; }
.choose svg { width: 15px; height: 15px; }
h3 { display: flex; justify-content: space-between; align-items: center; margin: 0; height: 17px; padding: 0 8px 0 3px; font-size: 10px; line-height: 15px; font-weight: 700; background: linear-gradient(#ababab, #8f8f8f); border: 1px solid #8c8c8c; color: #111; }
h3 i { width: 7px; height: 4px; background: #111; clip-path: polygon(50% 0, 100% 100%, 0 100%); }
section + section { margin-top: 3px; }
table { width: calc(100% - 13px); margin-left: 13px; border-spacing: 0; table-layout: fixed; border-left: 1px solid #a0a0a0; }
th, td { height: 16px; padding: 0 0 0 1px; border: solid #a0a0a0; border-width: 0 1px 1px 0; font-weight: 400; line-height: 15px; text-align: left; white-space: nowrap; }
tr:nth-child(3n) > * { height: 17px; line-height: 16px; }
th { width: 52px; padding-left: 2px; background: #f0f0f0; }
td { background: #fff; }
.ro { background: #f0f0f0; }
td .swatch { display: inline-block; margin: 0 5px 0 1px; vertical-align: -1px; }
td .rule { display: inline-block; width: 26px; margin: 0 3px 0 2px; vertical-align: 3px; }

/* vertical toolbars */
.docks { flex: none; display: flex; align-items: flex-start; gap: 2px; padding: 0 3px 0 2px; border-right: 1px solid #777; }
.dock { width: 20px; padding: 6px 0 0; border: 1px solid #85858b; background: linear-gradient(#85858b, #85858b) 2px 1px/14px 1px no-repeat, linear-gradient(#85858b, #85858b) 2px 3px/14px 1px no-repeat, linear-gradient(#b4b4ba 5px, #efefef 5px); }
.dock button { width: 18px; height: 17px; }
.dock svg { width: 15px; height: 15px; }
.dock > :nth-child(7n) { margin-bottom: 1px; }
hr { height: 1px; margin: 2px 1px; border: 0; background: #999; }

/* drawing area */
.canvas { flex: 1; position: relative; background: #000; overflow: hidden; }
.view { padding: 3px; color: #ddd; }
.hex { position: absolute; left: 200px; top: 161px; width: 184px; height: 160px; stroke: #ddd; }
.mark { position: absolute; right: 55px; bottom: 17px; width: 180px; height: 85px; padding: 0 14px; display: flex; align-items: center; gap: 11px; background: #233056; color: #dde1ea; }
.dots { position: absolute; left: 77px; bottom: 100%; width: 30px; height: 6px; fill: #aaa; stroke: none; }
.logo { width: 36px; height: 38px; stroke: #dde1ea; stroke-width: 2; stroke-linecap: round; }
.play { fill: #dde1ea; stroke: none; }
.name { display: flex; flex-direction: column; white-space: nowrap; }
.name strong { font-size: 26px; line-height: 28px; font-weight: 500; }
.name span { font: 12px/14px "DejaVu Sans", sans-serif; }
```
